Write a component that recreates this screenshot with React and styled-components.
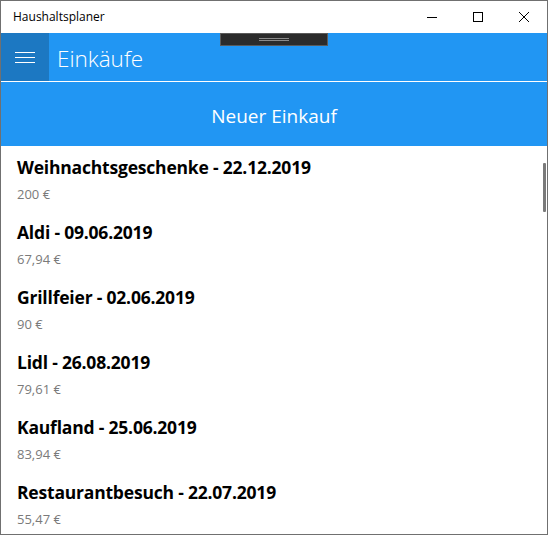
import React from "react";
import styled, { createGlobalStyle } from "styled-components";

const Global = createGlobalStyle`
  html, body { margin: 0; padding: 0; background: #fff; }
  * { box-sizing: border-box; }
`;

const Win = styled.div`
  position: relative;
  width: 548px;
  height: 535px;
  border: 1px solid #707070;
  display: flex;
  flex-direction: column;
  overflow: hidden;
  font-family: "Open Sans", "Noto Sans", sans-serif;
  background: #fff;
`;

const TitleBar = styled.div`
  height: 32px;
  flex: none;
  display: flex;
  align-items: center;
  background: #fff;
`;

const TitleText = styled.div`
  flex: 1;
  padding-left: 12px;
  font-size: 12px;
  color: #000;
  padding-bottom: 1px;
`;

const CtrlBtn = styled.div`
  width: 46px;
  height: 32px;
  display: flex;
  align-items: center;
  justify-content: center;
`;

const Header = styled.div`
  height: 48px;
  flex: none;
  display: flex;
  align-items: stretch;
  background: #2196f3;
  border-bottom: 1px solid #fff;
  box-sizing: content-box;
`;

const MenuBox = styled.div`
  width: 48px;
  background: #1c78c2;
  display: flex;
  flex-direction: column;
  align-items: center;
  justify-content: center;
  gap: 4px;
`;

const MenuLine = styled.div`
  width: 20px;
  height: 1px;
  background: #fff;
`;

const PageTitle = styled.div`
  display: flex;
  align-items: center;
  padding-left: 8px;
  padding-top: 2px;
  font-size: 22.5px;
  font-weight: 300;
  color: #fff;
`;

const NewButton = styled.div`
  height: 64px;
  flex: none;
  background: #2196f3;
  display: flex;
  align-items: center;
  justify-content: center;
  color: #fff;
  font-size: 19px;
  font-weight: 400;
  padding-top: 4px;
`;

const List = styled.div`
  flex: 1;
  overflow: hidden;
`;

const Item = styled.div`
  height: 65px;
  padding: 9px 0 0 16px;
  display: flex;
  flex-direction: column;
`;

const ItemTitle = styled.div`
  font-size: 17.5px;
  line-height: 24px;
  font-weight: 700;
  color: #000;
  letter-spacing: -0.2px;
`;

const ItemSub = styled.div`
  margin-top: 6px;
  font-size: 13px;
  line-height: 18px;
  color: #7a7a7a;
`;

const Handle = styled.div`
  position: absolute;
  left: 219px;
  top: 32px;
  width: 108px;
  height: 13px;
  background: #2b2b2b;
  border: 1px solid #5a5a5a;
  display: flex;
  flex-direction: column;
  align-items: center;
  justify-content: center;
  gap: 1px;
`;

const HandleLine = styled.div`
  width: 30px;
  height: 1px;
  background: #8a8a8a;
`;

const ScrollThumb = styled.div`
  position: absolute;
  left: 542px;
  top: 162px;
  width: 3px;
  height: 49px;
  background: #7a7a7a;
  border-radius: 1px;
`;

const items = [
  ["Weihnachtsgeschenke - 22.12.2019", "200 €"],
  ["Aldi - 09.06.2019", "67,94 €"],
  ["Grillfeier - 02.06.2019", "90 €"],
  ["Lidl - 26.08.2019", "79,61 €"],
  ["Kaufland - 25.06.2019", "83,94 €"],
  ["Restaurantbesuch - 22.07.2019", "55,47 €"],
];

export default function App() {
  return (
    <>
      <Global />
      <Win>
        <TitleBar>
          <TitleText>Haushaltsplaner</TitleText>
          <CtrlBtn>
            <svg width="10" height="10" viewBox="0 0 10 10">
              <line x1="0" y1="5.5" x2="10" y2="5.5" stroke="#000" strokeWidth="1" />
            </svg>
          </CtrlBtn>
          <CtrlBtn>
            <svg width="10" height="10" viewBox="0 0 10 10">
              <rect x="0.5" y="0.5" width="9" height="9" fill="none" stroke="#000" strokeWidth="1" />
            </svg>
          </CtrlBtn>
          <CtrlBtn>
            <svg width="10" height="10" viewBox="0 0 10 10">
              <path d="M0 0 L10 10 M10 0 L0 10" stroke="#000" strokeWidth="1" />
            </svg>
          </CtrlBtn>
        </TitleBar>
        <Header>
          <MenuBox>
            <MenuLine />
            <MenuLine />
            <MenuLine />
          </MenuBox>
          <PageTitle>Einkäufe</PageTitle>
        </Header>
        <NewButton>Neuer Einkauf</NewButton>
        <List>
          {items.map(([t, s]) => (
            <Item key={t}>
              <ItemTitle>{t}</ItemTitle>
              <ItemSub>{s}</ItemSub>
            </Item>
          ))}
        </List>
        <Handle>
          <HandleLine />
          <HandleLine />
        </Handle>
        <ScrollThumb />
      </Win>
    </>
  );
}
